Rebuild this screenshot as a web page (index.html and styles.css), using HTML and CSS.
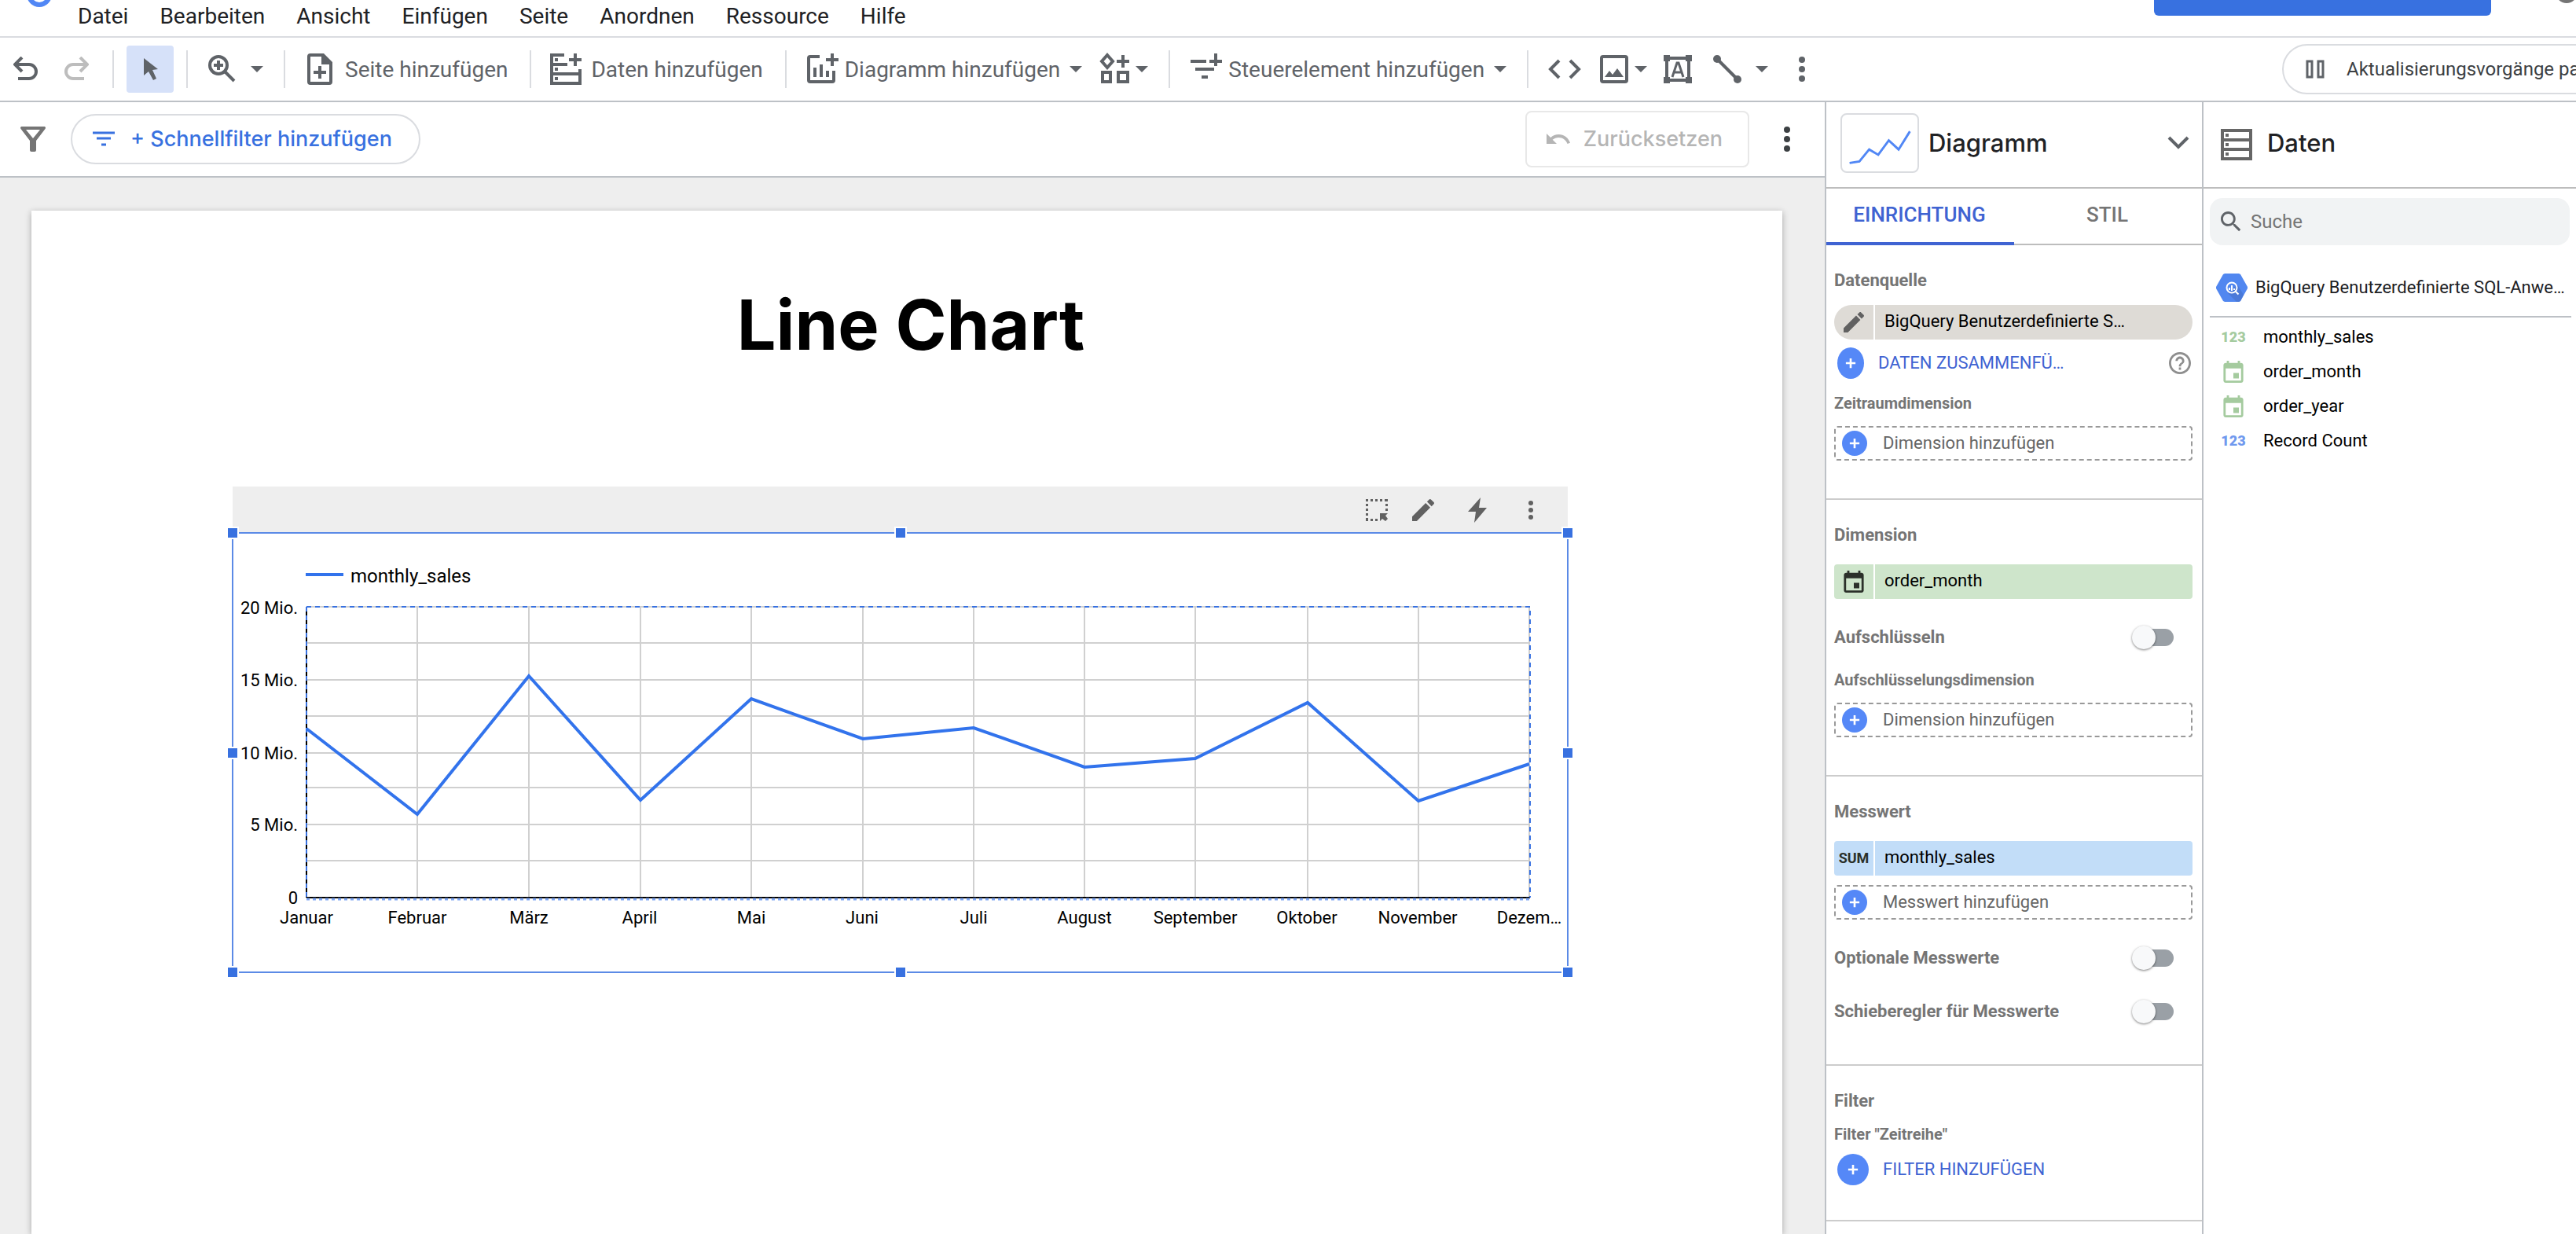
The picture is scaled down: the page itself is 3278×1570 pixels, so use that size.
FILE: index.html
```html
<!DOCTYPE html>
<html lang="de">
<head>
<meta charset="utf-8">
<meta name="viewport" content="width=device-width, initial-scale=1">
<title>Line Chart</title>
<link rel="stylesheet" href="styles.css">
</head>
<body>
<svg class="defs" aria-hidden="true">
  <symbol id="plus" viewBox="0 0 16 16"><path d="M8 1v14M1 8h14" stroke="#fff" stroke-width="3"/></symbol>
  <symbol id="caret" viewBox="0 0 16 8"><path d="M0 0h16L8 8z" fill="currentColor"/></symbol>
  <symbol id="dots" viewBox="0 0 8 32"><g fill="currentColor"><circle cx="4" cy="4" r="4"/><circle cx="4" cy="16" r="4"/><circle cx="4" cy="28" r="4"/></g></symbol>
  <symbol id="calendar" viewBox="3 1 18 20"><path fill="currentColor" d="M19 3h-1V1h-2v2H8V1H6v2H5c-1.100 0-2 .9-2 2v14c0 1.100.9 2 2 2h14c1.100 0 2-.9 2-2V5c0-1.100-.9-2-2-2zm0 16H5V8h14v11zm-2-7h-5v5h5v-5z"/></symbol>
  <symbol id="pencil" viewBox="3 3 18 18"><path fill="currentColor" d="M3 17.250V21h3.750L17.810 9.940l-3.750-3.750L3 17.250zM20.710 7.040c.39-.39.39-1.020 0-1.410l-2.340-2.340c-.39-.39-1.020-.39-1.410 0l-1.830 1.830 3.750 3.750 1.830-1.830z"/></symbol>
</svg>

<header class="menubar">
  <svg class="logo" viewBox="0 0 32 10" aria-hidden="true"><circle cx="16" cy="-7" r="13" fill="none" stroke="#5187f5" stroke-width="6"/></svg>
  <nav class="menus">
    <button>Datei</button><button>Bearbeiten</button><button>Ansicht</button><button>Einfügen</button><button>Seite</button><button>Anordnen</button><button>Ressource</button><button>Hilfe</button>
  </nav>
  <button class="share" aria-label="Freigeben"></button>
  <svg class="avatar" viewBox="0 0 48 10" aria-hidden="true"><circle cx="24" cy="-10" r="14" fill="#757575"/></svg>
</header>

<div class="toolbar" role="toolbar">
  <div class="group history">
    <button aria-label="Rückgängig"><svg class="i32" viewBox="0 0 32 32"><path d="M2 10h18a9 9 0 0 1 0 18H6M11 1l-9 9 9 9" fill="none" stroke="currentColor" stroke-width="4"/></svg></button>
    <button class="faded" aria-label="Wiederholen"><svg class="i32" viewBox="0 0 32 32"><path d="M30 10H12a9 9 0 0 0 0 18h14M21 1l9 9-9 9" fill="none" stroke="currentColor" stroke-width="4"/></svg></button>
  </div>
  <div class="group pointer">
    <button class="active" aria-label="Auswählen"><svg class="i60" viewBox="0 0 60 60"><path fill="currentColor" d="M22 16v22l6-5 6 11 4-2-5-11 7-1z"/></svg></button>
  </div>
  <div class="group">
    <button aria-label="Zoom"><svg class="i48" viewBox="0 0 48 48"><g fill="none" stroke="currentColor" stroke-width="4"><circle cx="19" cy="19" r="11"/><path d="M27 27l12 12M19 13v12M13 19h12"/></g></svg><svg class="caret"><use href="#caret"/></svg></button>
  </div>
  <div class="group plain">
    <button><svg class="i48" viewBox="0 0 48 48"><path fill="currentColor" fill-rule="evenodd" d="M12 4h17l11 11v25a4 4 0 0 1-4 4H12a4 4 0 0 1-4-4V8a4 4 0 0 1 4-4zm0 4v32h24V18H26V8zm10 12h4v6h6v4h-6v6h-4v-6h-6v-4h6z"/></svg><span>Seite hinzufügen</span></button>
  </div>
  <div class="group plain">
    <button><svg class="i48" viewBox="0 0 48 48"><g fill="none" stroke="currentColor" stroke-width="4"><path d="M22 6H6v36h36V24M6 18h20M6 30h36M36 4v16M28 12h16"/></g><path fill="currentColor" d="M10 10h4v4h-4zM10 22h4v4h-4zM10 34h4v4h-4z"/></svg><span>Daten hinzufügen</span></button>
  </div>
  <div class="group">
    <button><svg class="i48" viewBox="0 0 48 48"><path d="M22 8H10a2 2 0 0 0-2 2v28a2 2 0 0 0 2 2h28a2 2 0 0 0 2-2V26M16 22v12M24 18v16M32 26v8M38 4v16M30 12h16" fill="none" stroke="currentColor" stroke-width="4"/></svg><span>Diagramm hinzufügen</span><svg class="caret"><use href="#caret"/></svg></button>
    <button class="tight shapes" aria-label="Community-Visualisierungen"><svg class="i48" viewBox="0 0 48 48"><path d="M14 6l7 8-7 8-7-8zM34 6v16M26 14h16M8 28h10v12H8zM28 28h12v12H28z" fill="none" stroke="currentColor" stroke-width="4"/></svg><svg class="caret"><use href="#caret"/></svg></button>
  </div>
  <div class="group">
    <button><svg class="i48" viewBox="0 0 48 48"><path d="M6 14h20M12 24h24M20 34h8M38 4v16M30 14h16" fill="none" stroke="currentColor" stroke-width="4"/></svg><span>Steuerelement hinzufügen</span><svg class="caret"><use href="#caret"/></svg></button>
  </div>
  <div class="group inserts">
    <button aria-label="URL einbetten"><svg class="i48" viewBox="0 0 48 48"><path d="M17 13L6 24l11 11M31 13l11 11-11 11" fill="none" stroke="currentColor" stroke-width="4"/></svg></button>
    <button class="tight" aria-label="Bild"><svg class="i48" viewBox="0 0 48 48"><rect x="8" y="8" width="32" height="32" rx="2" fill="none" stroke="currentColor" stroke-width="4"/><path fill="currentColor" d="M12 34l6-8 4 5 6-8 8 11z"/></svg><svg class="caret"><use href="#caret"/></svg></button>
    <button aria-label="Text"><svg class="i48" viewBox="0 0 48 48"><path d="M10 10h28v28H10z" fill="none" stroke="currentColor" stroke-width="4"/><path d="M17 34l6-18h2l6 18M19 28h10" fill="none" stroke="currentColor" stroke-width="3"/><path fill="currentColor" d="M6 6h8v8H6zM34 6h8v8h-8zM6 34h8v8H6zM34 34h8v8h-8z"/></svg></button>
    <button aria-label="Linie"><svg class="i48" viewBox="0 0 48 48"><path d="M11 11l26 26" stroke="currentColor" stroke-width="4"/><g fill="currentColor"><circle cx="11" cy="11" r="5"/><circle cx="37" cy="37" r="5"/></g></svg><svg class="caret"><use href="#caret"/></svg></button>
    <button class="more" aria-label="Mehr"><svg class="dots"><use href="#dots"/></svg></button>
  </div>
  <div class="pausewrap">
    <button class="pause"><svg class="i24" viewBox="0 0 24 24"><path d="M2 2h6v20H2zM16 2h6v20h-6z" fill="none" stroke="currentColor" stroke-width="3"/></svg>Aktualisierungsvorgänge pa</button>
  </div>
</div>

<div class="workspace">
  <main class="editor">
    <div class="filterbar">
      <svg class="i32 funnel" viewBox="0 0 32 32" aria-hidden="true"><path fill="currentColor" fill-rule="evenodd" d="M2 0h28c2 0 2.500 1.500 1.500 3L20 18v12a2 2 0 0 1-2 2h-4a2 2 0 0 1-2-2V18L.5 3C-.5 1.500 0 0 2 0zM7 4l9 11 9-11z"/></svg>
      <button class="quick"><svg class="i28" viewBox="0 0 28 28"><path d="M0 6h28M5 13h18M11 21h6" stroke="currentColor" stroke-width="3"/></svg>+ Schnellfilter hinzufügen</button>
      <button class="reset" disabled><svg class="i32" viewBox="0 0 32 32"><path fill="currentColor" d="M16.500 10c-4 0-7.500 1.500-10.300 4L1 9v13h13l-5.300-5.200c2-1.700 4.800-2.800 7.800-2.800 5 0 9.500 3.300 11 8l3.500-1.200C29 14.500 23.200 10 16.500 10z"/></svg>Zurücksetzen</button>
      <button class="barmore" aria-label="Mehr"><svg class="dots"><use href="#dots"/></svg></button>
    </div>
    <div class="canvas">
      <article class="sheet">
        <h1>Line Chart</h1>
        <section class="component">
          <div class="chartbar">
            <button aria-label="Auswahl"><svg class="i28" viewBox="0 0 28 28"><path d="M0 1.500h28M1.500 0v28M0 26.500h18M26.500 0v16" fill="none" stroke="currentColor" stroke-width="3" stroke-dasharray="3 3"/><path fill="currentColor" d="M18 18h10l-3 3 3 4-3 3-4-3-3 3z"/></svg></button>
            <button aria-label="Bearbeiten"><svg class="i28"><use href="#pencil"/></svg></button>
            <button aria-label="Aktionen"><svg class="i32" viewBox="0 0 32 32"><path fill="currentColor" d="M20 0L4 18h10l-2 14 16-19H18z"/></svg></button>
            <button aria-label="Mehr"><svg class="smalldots"><use href="#dots"/></svg></button>
          </div>
          <figure class="chart">
            <svg viewBox="296 678 1699 559" role="img" aria-label="monthly_sales nach Monat">
              <path d="M389 731h48" stroke="#3273ec" stroke-width="4"/>
              <text class="legend" x="446" y="741">monthly_sales</text>
              <g stroke="#d0d0d0" stroke-width="2">
                <path d="M390 772h1557M390 818h1557M390 865h1557M390 911h1557M390 958h1557M390 1002h1557M390 1049h1557M390 1095h1557"/>
                <path d="M531 772v370M673 772v370M815 772v370M956 772v370M1098 772v370M1239 772v370M1380 772v370M1521 772v370M1664 772v370M1805 772v370M1946 772v370"/>
              </g>
              <path d="M390 772v370" stroke="#000" stroke-width="2"/>
              <path d="M390 1142h1557" stroke="#000" stroke-width="2"/>
              <path d="M390 1144h1557" stroke="#7ea6f3" stroke-width="3" stroke-dasharray="4 4"/>
              <path d="M390 772h1557v370M390 772v370" fill="none" stroke="#3871e0" stroke-width="2" stroke-dasharray="6 5"/>
              <path d="M390 927L531 1036L673 860L815 1018L956 889L1098 940L1239 926L1380 976L1521 965L1664 894L1805 1019L1946 972" fill="none" stroke="#3273ec" stroke-width="4"/>
              <g class="ylabels">
                <text x="379" y="781">20 Mio.</text><text x="379" y="873">15 Mio.</text><text x="379" y="966">10 Mio.</text><text x="379" y="1057">5 Mio.</text><text x="379" y="1150">0</text>
              </g>
              <g class="xlabels">
                <text x="390" y="1175">Januar</text><text x="531" y="1175">Februar</text><text x="673" y="1175">März</text><text x="814" y="1175">April</text><text x="956" y="1175">Mai</text><text x="1097" y="1175">Juni</text><text x="1239" y="1175">Juli</text><text x="1380" y="1175">August</text><text x="1521" y="1175">September</text><text x="1663" y="1175">Oktober</text><text x="1804" y="1175">November</text><text x="1946" y="1175">Dezem…</text>
              </g>
            </svg>
            <i class="handle n w"></i><i class="handle n c"></i><i class="handle n e"></i>
            <i class="handle m w"></i><i class="handle m e"></i>
            <i class="handle s w"></i><i class="handle s c"></i><i class="handle s e"></i>
          </figure>
        </section>
      </article>
    </div>
  </main>

  <aside class="panel setup">
    <header class="panelhead">
      <span class="thumb"><svg viewBox="0 0 100 76" aria-hidden="true"><path d="M10 64l13-2 13-16 12 7 14-19 13 12 15-24" fill="none" stroke="#5187f5" stroke-width="3"/></svg></span>
      <h2>Diagramm</h2>
      <button class="expand" aria-label="Diagrammtyp wählen"><svg viewBox="0 0 28 18"><path d="M2 2l12 12L26 2" fill="none" stroke="currentColor" stroke-width="4"/></svg></button>
    </header>
    <div class="tabs" role="tablist">
      <button role="tab" aria-selected="true">EINRICHTUNG</button><button role="tab" aria-selected="false">STIL</button>
    </div>
    <section class="source">
      <h3>Datenquelle</h3>
      <button class="chip grey"><span class="chipicon"><svg class="i26"><use href="#pencil"/></svg></span><span class="chiptext">BigQuery Benutzerdefinierte S…</span></button>
      <div class="blend">
        <button class="linkbtn"><span class="round oval"><svg><use href="#plus"/></svg></span>DATEN ZUSAMMENFÜ…</button>
        <button class="help" aria-label="Hilfe"><svg class="i28" viewBox="2 2 20 20"><path fill="currentColor" d="M11 18h2v-2h-2v2zm1-16C6.480 2 2 6.480 2 12s4.480 10 10 10 10-4.480 10-10S17.520 2 12 2zm0 18c-4.410 0-8-3.590-8-8s3.590-8 8-8 8 3.590 8 8-3.590 8-8 8zm0-14c-2.210 0-4 1.790-4 4h2c0-1.100.9-2 2-2s2 .9 2 2c0 2-3 1.750-3 5h2c0-2.250 3-2.500 3-5 0-2.210-1.790-4-4-4z"/></svg></button>
      </div>
      <h4>Zeitraumdimension</h4>
      <button class="add"><span class="round"><svg><use href="#plus"/></svg></span>Dimension hinzufügen</button>
    </section>
    <section>
      <h3>Dimension</h3>
      <button class="chip green"><span class="chipicon"><svg class="cal"><use href="#calendar"/></svg></span><span class="chiptext">order_month</span></button>
      <label class="toggle">Aufschlüsseln<input type="checkbox" role="switch"></label>
      <h4>Aufschlüsselungsdimension</h4>
      <button class="add"><span class="round"><svg><use href="#plus"/></svg></span>Dimension hinzufügen</button>
    </section>
    <section class="metric">
      <h3>Messwert</h3>
      <button class="chip blue"><span class="chipicon sum">SUM</span><span class="chiptext">monthly_sales</span></button>
      <button class="add"><span class="round"><svg><use href="#plus"/></svg></span>Messwert hinzufügen</button>
      <label class="toggle">Optionale Messwerte<input type="checkbox" role="switch"></label>
      <label class="toggle">Schieberegler für Messwerte<input type="checkbox" role="switch"></label>
    </section>
    <section class="filter">
      <h3>Filter</h3>
      <h4>Filter "Zeitreihe"</h4>
      <button class="linkbtn"><span class="round big"><svg><use href="#plus"/></svg></span>FILTER HINZUFÜGEN</button>
    </section>
  </aside>

  <aside class="panel data">
    <header class="panelhead">
      <svg class="i40" viewBox="0 0 40 40" aria-hidden="true"><path d="M2 2h36v36H2zM2 14h36M2 26h36" fill="none" stroke="#666" stroke-width="4"/><path fill="#666" d="M6 6h4v4H6zM6 18h4v4H6zM6 30h4v4H6z"/></svg>
      <h2>Daten</h2>
    </header>
    <label class="search"><svg class="i26" viewBox="3 3 18 18" aria-hidden="true"><path fill="currentColor" d="M15.500 14h-.79l-.28-.27C15.410 12.590 16 11.110 16 9.500 16 5.910 13.090 3 9.500 3S3 5.910 3 9.500 5.910 16 9.500 16c1.610 0 3.090-.59 4.230-1.570l.27.28v.79l5 4.990L20.490 19l-4.990-5zm-6 0C7.010 14 5 11.990 5 9.500S7.010 5 9.500 5 14 7.010 14 9.500 11.990 14 9.500 14z"/></svg><input type="search" placeholder="Suche" aria-label="Suche"></label>
    <div class="sourcehead"><svg class="hex" viewBox="0 0 40 36" aria-hidden="true"><path fill="#5187f0" d="M11 0h18l2 1 9 16v2l-9 16-2 1H11l-2-1L0 19v-2L9 1z"/><path fill="#4a79d8" d="M27 14l8 13-4 8-2 1h-3L15 25z"/><g fill="none" stroke="#fff" stroke-width="2"><circle cx="20" cy="18" r="6.500"/><path d="M24.500 22.500l4 4M17 18v3M20 15v7M23 19v2"/></g></svg>BigQuery Benutzerdefinierte SQL-Anwe…</div>
    <ul class="fields">
      <li><span class="kind num">123</span>monthly_sales</li>
      <li><span class="kind"><svg class="cal"><use href="#calendar"/></svg></span>order_month</li>
      <li><span class="kind"><svg class="cal"><use href="#calendar"/></svg></span>order_year</li>
      <li><span class="kind num metricnum">123</span>Record Count</li>
    </ul>
  </aside>
</div>
</body>
</html>
```
FILE: styles.css
```css
:root {
  --ui: Roboto, "Liberation Sans", sans-serif;
  --display: "Google Sans", Inter, sans-serif;
  --icon: #5f6368;
  --line: #bdc1c6;
  --blue: #3871e0;
}
* { box-sizing: border-box; }
body {
  margin: 0;
  height: 100vh;
  display: flex;
  flex-direction: column;
  overflow: hidden;
  background: #fff;
  font: 22px/28px var(--ui);
  color: #000;
}
button, input { font: inherit; color: inherit; }
button { margin: 0; padding: 0; border: 0; background: none; display: flex; align-items: center; white-space: nowrap; text-align: left; }
h1, h2, h3, h4, figure, ul { margin: 0; padding: 0; }
svg { display: block; flex: none; }
.defs { position: absolute; width: 0; height: 0; }
.i24 { width: 24px; height: 24px; }
.i26 { width: 26px; height: 26px; }
.i28 { width: 28px; height: 28px; }
.i32 { width: 32px; height: 32px; }
.i40 { width: 40px; height: 40px; }
.i48 { width: 48px; height: 48px; }
.i60 { width: 60px; height: 60px; }
.caret { width: 16px; height: 8px; }
.dots { width: 8px; height: 32px; }
.smalldots { width: 6px; height: 24px; }
.cal { width: 26px; height: 28px; }

/* menu bar */
.menubar { flex: none; height: 48px; display: flex; align-items: flex-start; border-bottom: 2px solid #dadce0; overflow: hidden; }
.logo { width: 32px; height: 10px; margin-left: 34px; }
.menus { display: flex; gap: 40px; margin-left: 33px; font-size: 28px; line-height: 42px; color: #202124; }
.share { width: 429px; height: 20px; margin-left: auto; border-radius: 0 0 6px 6px; background: var(--blue); }
.avatar { width: 48px; height: 10px; margin: 0 0 0 72px; margin-right: -12px; }

/* toolbar */
.toolbar { flex: none; height: 82px; display: flex; align-items: center; border-bottom: 2px solid var(--line); font-size: 28px; color: var(--icon); }
.group { height: 48px; display: flex; align-items: center; padding: 0 26px 0 20px; border-right: 2px solid #dadce0; }
.group.plain { padding-right: 28px; }
.group.history { padding: 0 30px 0 17px; gap: 32px; }
.group.pointer { padding: 0 16px; }
.group button { gap: 6px; }
.group.plain button { gap: 8px; }
.group button span { padding-top: 2px; }
.group .caret { margin-left: 6px; }
.group .tight { gap: 2px; }
.group .tight .caret { margin-left: 0; }
.group .shapes { margin-left: 18px; }
.faded { color: #bdbdbd; }
.active { background: #d6e1f9; border-radius: 4px; }
.group.inserts { border: 0; gap: 15px; padding-left: 22px; padding-right: 0; }
.group .more { width: 48px; justify-content: center; margin-left: 4px; }
.pausewrap { width: 374px; margin-left: auto; overflow: hidden; }
.pause { width: max-content; height: 64px; padding: 0 32px 0 28px; gap: 28px; border: 2px solid #dadce0; border-radius: 32px; font-size: 24px; color: #3c4043; }
.pause svg { color: var(--icon); }

/* workspace */
.workspace { flex: 1; min-height: 0; display: grid; grid-template-columns: minmax(0, 1fr) 480px 476px; }
.editor { min-height: 0; display: flex; flex-direction: column; }
.filterbar { flex: none; height: 96px; display: flex; align-items: center; padding: 0 24px 0 26px; border-bottom: 2px solid var(--line); font: 500 27px/32px var(--display); }
.funnel { color: #757575; }
.quick { height: 64px; margin-left: 32px; padding: 0 34px 0 26px; gap: 20px; border: 2px solid #dadce0; border-radius: 32px; color: var(--blue); }
.reset { height: 72px; margin-left: auto; padding: 0 32px 0 24px; gap: 16px; border: 2px solid #e8e8e8; border-radius: 8px; color: #b5b5b5; }
.barmore { width: 48px; height: 48px; margin-left: 24px; justify-content: center; color: #3c4043; }
.canvas { flex: 1; min-height: 0; display: flex; padding: 42px 54px 0 40px; background: #eee; overflow: hidden; }
.sheet { flex: 1; min-width: 0; height: max-content; min-height: 100%; background: #fff; box-shadow: 0 2px 8px rgba(0, 0, 0, .3); }
.sheet h1 { padding-top: 91px; padding-left: 10px; text-align: center; font: 700 88px/108px var(--display); }
.component { margin: 152px 273px 0 256px; }
.chartbar { height: 59px; display: flex; align-items: center; justify-content: flex-end; gap: 31px; padding-right: 44px; background: #eee; color: #616161; }
.chartbar button:nth-child(3) { margin: 0 18px 0 8px; }
.chart { position: relative; outline: 2px solid #5b8ae6; outline-offset: -1px; }
.chart > svg { width: 100%; height: auto; }
.chart text { font-size: 22px; fill: #000; }
.chart .legend { font-size: 24px; }
.ylabels { text-anchor: end; }
.xlabels { text-anchor: middle; }
.handle { position: absolute; width: 16px; height: 16px; border: 2px solid #fff; background: var(--blue); transform: translate(-50%, -50%); }
.n { top: 0; } .m { top: 50%; } .s { top: 100%; }
.w { left: 0; } .c { left: 50%; } .e { left: 100%; }

/* side panels */
.panel { min-height: 0; overflow: hidden; border-left: 2px solid var(--line); background: #fff; }
.panelhead { height: 110px; display: flex; align-items: center; border-bottom: 2px solid #bdbdbd; }
.panelhead h2 { font: 500 31px/40px var(--display); color: #202124; }
.setup .panelhead { padding: 0 16px 4px 18px; }
.thumb { width: 100px; height: 76px; border: 2px solid #dadce0; border-radius: 8px; margin-right: 12px; }
.thumb svg { width: 100%; }
.expand { margin-left: auto; color: var(--icon); }
.expand svg { width: 28px; height: 18px; }
.tabs { display: grid; grid-template-columns: 1fr 1fr; height: 72px; border-bottom: 2px solid #bdbdbd; font-size: 26px; font-weight: 500; color: #757575; }
.tabs button { height: 72px; justify-content: center; padding-right: 2px; padding-bottom: 2px; border-bottom: 4px solid transparent; }
.tabs [aria-selected="true"] { color: #3f63d2; border-color: #3f63d2; }
.setup section { padding: 31px 12px 48px 10px; border-bottom: 2px solid #ccc; }
.setup h3 { font-size: 22px; line-height: 28px; font-weight: 700; color: #757575; margin-bottom: 23px; }
.setup h4 { font-size: 20px; line-height: 24px; font-weight: 700; color: #757575; margin-bottom: 17px; }
.setup .source h3 { margin-bottom: 17px; }
.chip { width: 100%; height: 44px; border-radius: 4px; overflow: hidden; }
.chipicon { width: 52px; height: 44px; display: flex; align-items: center; justify-content: center; border-right: 2px solid #fff; color: #2b302a; }
.chiptext { padding: 0 0 2px 12px; }
.grey { background: #dedbd6; border-radius: 22px; }
.grey .chipicon { color: #616161; }
.green { background: #cee5cb; }
.blue { background: #c2ddf8; }
.sum { font-size: 18px; font-weight: 700; }
.blend { display: flex; justify-content: space-between; align-items: center; margin: 10px 0 19px; padding-right: 2px; }
.linkbtn { gap: 18px; padding-left: 4px; color: #3f63d2; }
.help { color: #8e8e8e; }
.round { width: 32px; height: 32px; border-radius: 50%; background: #5588f7; display: flex; align-items: center; justify-content: center; flex: none; }
.round svg { width: 14px; height: 14px; }
.oval { width: 34px; height: 40px; }
.big { width: 40px; height: 40px; }
.add { width: 100%; height: 44px; padding: 0 8px; gap: 20px; border: 2px dashed #999; border-radius: 4px; color: #666; }
.toggle { display: flex; align-items: center; justify-content: space-between; height: 30px; margin: 34px 24px 0 0; font-weight: 700; color: #757575; }
.toggle + .toggle { margin-top: 38px; }
.toggle + h4 { margin-top: 27px; }
.toggle input { appearance: none; width: 48px; height: 22px; margin: 0; border-radius: 11px; background: #9aa0a6; display: flex; align-items: center; }
.toggle input::before { content: ""; width: 30px; height: 30px; margin-left: -5px; border-radius: 50%; background: #f8f9fa; box-shadow: 0 1px 3px rgba(0, 0, 0, .5); }
.metric .add { margin-top: 12px; }
.setup .metric { padding-bottom: 52px; }
.setup .filter h3 { margin-bottom: 16px; }
.setup .filter h4 { margin-bottom: 13px; }
.setup .filter { padding-bottom: 44px; }
.data .panelhead { padding: 0 22px 4px; gap: 19px; }
.data .i40 { margin-top: 4px; }
.search { height: 60px; margin: 12px 8px 0; padding: 0 14px; display: flex; align-items: center; gap: 12px; border-radius: 16px; background: #f1f3f4; font-size: 24px; color: var(--icon); }
.search input { flex: 1; min-width: 0; border: 0; padding: 0; background: none; outline: 0; appearance: none; }
.search input::placeholder { color: #757575; }
.sourcehead { height: 76px; margin: 16px 6px 3px 8px; display: flex; align-items: center; gap: 10px; padding: 2px 0 0 8px; border-bottom: 2px solid var(--line); color: #202124; white-space: nowrap; }
.hex { width: 40px; height: 36px; }
.fields { list-style: none; padding-left: 20px; }
.fields li { height: 44px; display: flex; align-items: center; gap: 20px; }
.kind { width: 36px; display: flex; justify-content: center; color: #a5cb9f; }
.num { font-size: 18px; font-weight: 900; }
.metricnum { color: #7099ee; }
```
